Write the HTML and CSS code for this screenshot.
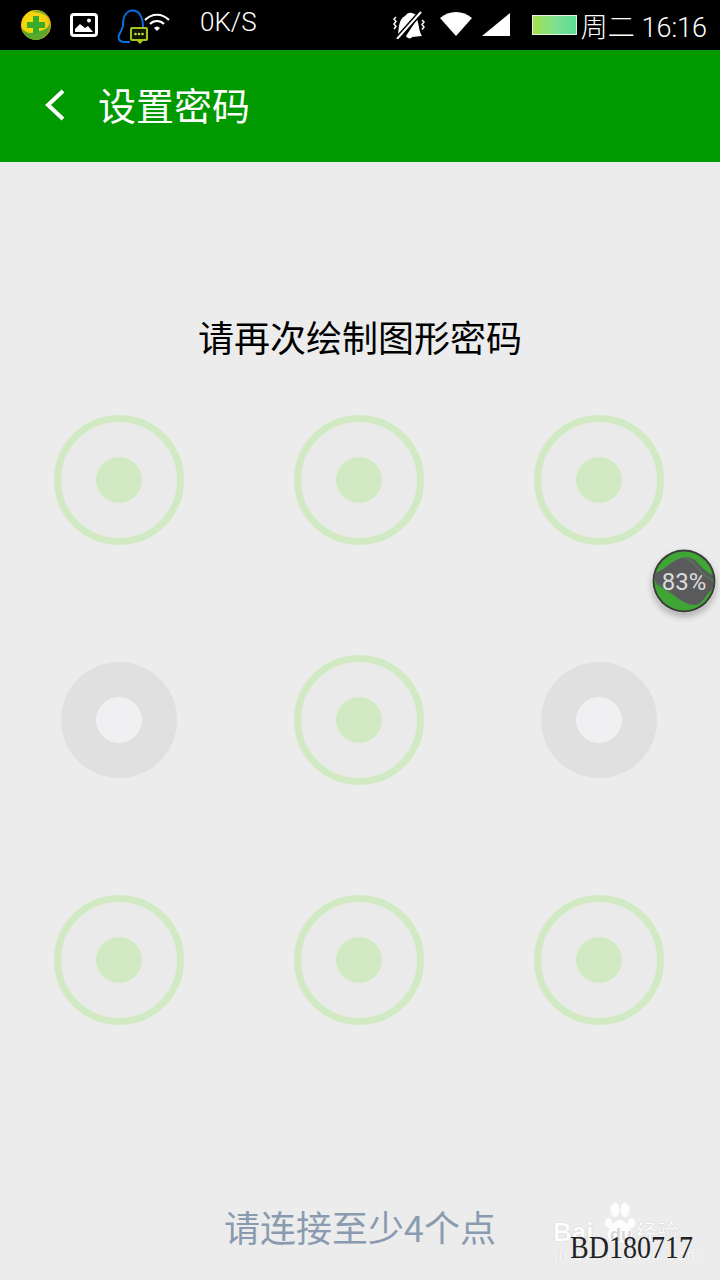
FILE: index.html
```html
<!DOCTYPE html>
<html lang="zh-CN">
	<head>
		<meta charset="UTF-8" />
		<meta name="viewport" content="width=device-width, initial-scale=1.0" />
		<title>设置密码</title>
		<link rel="stylesheet" href="styles.css">
	</head>
	<body>
		<div class="status-bar">
			<svg class="icon-safe" width="32" height="32" viewBox="0 0 32 32">
				<defs>
					<radialGradient id="safeBall" cx="45%" cy="45%" r="60%">
						<stop offset="0" stop-color="#ffe600" />
						<stop offset="0.7" stop-color="#f4cf10" />
						<stop offset="1" stop-color="#d89a10" />
					</radialGradient>
				</defs>
				<circle cx="16" cy="16" r="15" fill="url(#safeBall)" />
				<path d="M2 19c5 8 13 4 18 3 5-1 8-3 10-8 1 9-6 17-14 17C9 31 3 26 2 19z" fill="#5ca82a" />
				<path d="M12 3c6-3 13-1 17 6-4-4-10-6-17-6z" fill="#6fb030" />
				<path d="M13 7h6v6h6v6h-6v6h-6v-6H7v-6h6z" fill="#3bab2c" />
			</svg>
			<svg class="icon-picture" width="28" height="24" viewBox="0 0 28 24">
				<rect x="1.500" y="1.500" width="25" height="21" rx="2.500" fill="none" stroke="#fff" stroke-width="3" />
				<path d="M5 19v-3l5-5 5 4 3-2 5 6z" fill="#fff" />
				<circle cx="19" cy="7.500" r="2" fill="#fff" />
			</svg>
			<svg class="icon-qq" width="32" height="36" viewBox="0 0 32 36">
				<path d="M26 18C26 8 22 1.500 16 1.500 9 1.500 6 8 6 16c0 5-4 8-4.500 12 0 3 2.500 5 6.500 5h5" fill="none" stroke="#0a6fe0" stroke-width="2" />
				<rect x="14" y="19" width="16" height="12" rx="1" fill="#101800" stroke="#a6c81e" stroke-width="2" />
				<path d="M20 32h6l-3 3z" fill="#a6c81e" />
				<circle cx="18.500" cy="25" r="1.300" fill="#c6e040" />
				<circle cx="22" cy="25" r="1.300" fill="#c6e040" />
				<circle cx="25.500" cy="25" r="1.300" fill="#c6e040" />
			</svg>
			<svg class="icon-wifi-small" width="26" height="20" viewBox="0 0 26 20">
				<path d="M1 8c7-7 17-7 24 0" fill="none" stroke="#fff" stroke-width="2.200" />
				<path d="M6 12c4-4 10-4 14 0" fill="none" stroke="#fff" stroke-width="2.200" />
				<path d="M10 16c2-2 4-2 6 0l-3 3z" fill="#fff" />
			</svg>
			<span class="net-speed">0K/S</span>
			<div class="status-right">
				<svg class="icon-mute" width="32" height="28" viewBox="0 0 32 28">
					<path d="M5 24C6 15 6 8 12 5c2-3 5-4 7-3l5 2z" fill="#fff" />
					<path d="M24 8c2 5 2 13 5 17l-10 1c0 2-5 2-6-1z" fill="#fff" />
					<path d="M4 28L28 1" stroke="#000" stroke-width="5" />
					<path d="M4 28L28 1" stroke="#fff" stroke-width="2" />
					<path d="M3 6L1 8l2 2.500L1 13l2 2.500L1 18M29 9l2 2-2 2.500 2 2.500-2 2.500" fill="none" stroke="#fff" stroke-width="1.500" />
				</svg>
				<svg class="icon-wifi" width="32" height="24" viewBox="0 0 32 24">
					<path d="M0 6c9-8 23-8 32 0L16 24z" fill="#fff" />
				</svg>
				<svg class="icon-signal" width="29" height="24" viewBox="0 0 29 24">
					<path d="M0 23L28 0v23z" fill="#fff" />
				</svg>
				<div class="battery"></div>
				<span class="status-time">周二 16:16</span>
			</div>
		</div>
		<header class="app-bar">
			<svg class="back-icon" width="22" height="32" viewBox="0 0 22 32">
				<path d="M19 2L4 16l15 14" fill="none" stroke="#fff" stroke-width="4" />
			</svg>
			<h1 class="app-title">设置密码</h1>
		</header>
		<main class="page">
			<p class="prompt">请再次绘制图形密码</p>
			<div class="pattern">
				<div class="dot dot-on"><span></span></div>
				<div class="dot dot-on"><span></span></div>
				<div class="dot dot-on"><span></span></div>
				<div class="dot dot-off"><span></span></div>
				<div class="dot dot-on"><span></span></div>
				<div class="dot dot-off"><span></span></div>
				<div class="dot dot-on"><span></span></div>
				<div class="dot dot-on"><span></span></div>
				<div class="dot dot-on"><span></span></div>
			</div>
			<p class="hint">请连接至少4个点</p>
		</main>
		<div class="float-ball">
			<svg width="64" height="64" viewBox="0 0 64 64">
				<circle cx="32" cy="32" r="31.500" fill="#3c3c3c" />
				<circle cx="32" cy="32" r="29.500" fill="#3fa535" />
				<path d="M3 24C12 22 22 8 36 8c10 2 14 14 25 18v13c-6 5-11 17-18 17C30 56 18 42 5 36 3 33 2 28 3 24z" fill="#5a5a5c" />
				<path d="M4 35C14 35 22 50 34 55M31 8c12 2 18 20 30 23" fill="none" stroke="#4f9a48" stroke-width="2" opacity="0.35" />
			</svg>
			<span class="float-text">83%</span>
		</div>
		<div class="watermark">
			<svg class="paw" width="32" height="42" viewBox="0 0 32 42">
				<ellipse cx="4.500" cy="21" rx="3.500" ry="5" fill="#fff" />
				<ellipse cx="11" cy="8" rx="4.500" ry="7" fill="#fff" />
				<ellipse cx="21" cy="8" rx="4.500" ry="7" fill="#fff" />
				<ellipse cx="27.500" cy="21" rx="3.500" ry="5" fill="#fff" />
				<path d="M16 18c6 0 13 10 12 17s-7 6-12 5-11 2-12-5 6-17 12-17z" fill="#fff" />
			</svg>
			<span class="wm-brand">Bai</span>
			<span class="wm-brand wm-du">du</span>
			<span class="wm-cn">经验</span>
			<span class="wm-url">jingyan.baidu.com</span>
		</div>
		<span class="stamp">BD180717</span>
	</body>
</html>
```

FILE: styles.css
```css
html,
body {
	margin: 0px;
	background: #ececec;
	width: 720px;
	height: 1280px;
	overflow: hidden;
	font-family: "Noto Sans CJK SC", Roboto, sans-serif;
}
body {
	display: flex;
	flex-direction: column;
	position: relative;
}
.status-bar {
	height: 50px;
	background: #000;
	color: #fff;
	display: flex;
	align-items: center;
	padding-left: 20px;
	padding-right: 13px;
	flex-shrink: 0;
}
.icon-picture {
	margin-left: 18px;
}
.icon-qq {
	margin-left: 19px;
	margin-top: 4px;
}
.icon-wifi-small {
	margin-left: -5px;
	margin-top: -6px;
}
.net-speed {
	font-family: Roboto, sans-serif;
	font-size: 26px;
	font-weight: 300;
	margin-left: 30px;
	margin-top: -6px;
}
.status-right {
	margin-left: auto;
	display: flex;
	align-items: center;
}
.icon-wifi {
	margin-left: 15px;
	margin-top: -2px;
}
.icon-signal {
	margin-left: 10px;
}
.battery {
	width: 43px;
	height: 18px;
	margin-left: 21px;
	border: 1px solid #e8f0e0;
	background: linear-gradient(90deg, #a5e04e, #7fe08e 50%, #5cdc98);
}
.status-time {
	font-family: Roboto, "Noto Sans CJK SC", sans-serif;
	font-size: 27px;
	font-weight: 300;
	margin-left: 4px;
	white-space: nowrap;
}
.app-bar {
	height: 112px;
	background: #009900;
	display: flex;
	align-items: center;
	padding-left: 44px;
	flex-shrink: 0;
}
.back-icon {
	margin-top: -2px;
}
.app-title {
	margin: -4px 0px 0px 32px;
	font-size: 38px;
	font-weight: 400;
	color: #fff;
	line-height: 1;
}
.page {
	flex: 1;
	display: flex;
	flex-direction: column;
	align-items: center;
}
.prompt {
	margin: 152px 0px 0px;
	font-size: 36px;
	line-height: 44px;
	color: #000;
}
.pattern {
	margin-top: 57px;
	margin-right: 2px;
	display: grid;
	grid-template-columns: repeat(3, 130px);
	grid-auto-rows: 130px;
	gap: 110px;
}
.dot {
	display: flex;
	align-items: center;
	justify-content: center;
	border-radius: 50%;
	box-sizing: border-box;
}
.dot span {
	width: 46px;
	height: 46px;
	border-radius: 50%;
}
.dot-on {
	border: 7px solid #d2eac4;
	background: #eaeaea;
}
.dot-on span {
	background: #d2eac4;
}
.dot-off {
	background: #e0e0e0;
	margin: 7px;
}
.dot-off span {
	background: #f0f0f2;
}
.hint {
	margin: 179px 0px 0px;
	font-size: 36px;
	line-height: 44px;
	color: #8a9bb0;
}
.float-ball {
	position: absolute;
	left: 652px;
	top: 549px;
	width: 64px;
	height: 64px;
	border-radius: 50%;
	box-shadow: 0px 4px 6px rgba(0, 0, 0, 0.25);
}
.float-ball svg {
	display: block;
}
.float-text {
	position: absolute;
	left: 0px;
	right: 0px;
	top: 18px;
	text-align: center;
	font-family: Roboto, sans-serif;
	font-size: 24px;
	line-height: 30px;
	font-weight: 400;
	color: #dcdcdc;
}
.watermark {
	position: absolute;
	left: 552px;
	top: 1200px;
	width: 130px;
	height: 66px;
	color: #fff;
	opacity: 0.9;
}
.paw {
	position: absolute;
	left: 52px;
	top: 2px;
}
.wm-brand {
	position: absolute;
	left: 1px;
	top: 17px;
	font-family: "Liberation Sans", sans-serif;
	font-weight: 700;
	font-size: 26px;
	line-height: 30px;
	text-shadow: 0px 0px 1px rgba(0, 0, 0, 0.25);
}
.wm-du {
	left: 58px;
	top: 25px;
	font-size: 18px;
	line-height: 20px;
	color: #d6d6d6;
	text-shadow: none;
}
.wm-cn {
	position: absolute;
	left: 84px;
	top: 16px;
	font-size: 21px;
	line-height: 28px;
	text-shadow: 0px 0px 1px rgba(0, 0, 0, 0.25);
}
.wm-url {
	position: absolute;
	left: 2px;
	top: 46px;
	font-family: "Liberation Sans", sans-serif;
	font-size: 15px;
	line-height: 18px;
	letter-spacing: 1.500px;
	white-space: nowrap;
	text-shadow: 0px 0px 1px rgba(0, 0, 0, 0.2);
}
.stamp {
	position: absolute;
	left: 570px;
	top: 1229px;
	font-family: "Liberation Serif", serif;
	font-size: 32px;
	line-height: 36px;
	color: #222;
	white-space: nowrap;
	transform: scaleX(0.875);
	transform-origin: left center;
}
```
